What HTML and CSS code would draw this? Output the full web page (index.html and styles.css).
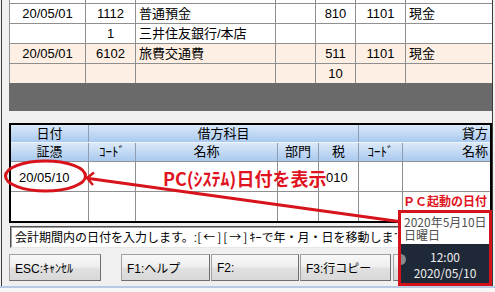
FILE: index.html
```html
<!DOCTYPE html>
<html lang="ja">
<head>
<meta charset="utf-8">
<title>仕訳入力</title>
<link rel="stylesheet" href="styles.css">
</head>
<body>
<div class="window">
  <div class="journal">
    <div class="jrow strip white"><span></span><span></span><span></span><span></span><span></span><span></span><span></span></div>
    <div class="jrow white">
      <span class="c">20/05/01</span><span class="c">1112</span><span class="l">普通預金</span><span></span><span class="c">810</span><span class="c">1101</span><span class="l">現金</span>
    </div>
    <div class="jrow white">
      <span></span><span class="c">1</span><span class="l">三井住友銀行/本店</span><span></span><span></span><span></span><span></span>
    </div>
    <div class="jrow peach">
      <span class="c">20/05/01</span><span class="c">6102</span><span class="l">旅費交通費</span><span></span><span class="c">511</span><span class="c">1101</span><span class="l">現金</span>
    </div>
    <div class="jrow peach">
      <span></span><span></span><span></span><span></span><span class="c">10</span><span></span><span></span>
    </div>
  </div>
  <div class="band"></div>

  <div class="entry">
    <div class="hrow h1">
      <span>日付</span><span>借方科目</span><span class="r">貸方</span>
    </div>
    <div class="hrow h2">
      <span>証憑</span><span>ｺｰﾄﾞ</span><span>名称</span><span>部門</span><span>税</span><span>ｺｰﾄﾞ</span><span class="r">名称</span>
    </div>
    <div class="drow">
      <span class="date">20/05/10</span><span></span><span></span><span></span><span class="tax">010</span><span></span><span></span>
    </div>
    <div class="drow last">
      <span></span><span></span><span></span><span></span><span></span><span></span><span></span>
    </div>
  </div>

  <div class="message"><span class="msg-text">会計期間内の日付を入力します。:<span class="keys">[←][→]</span>ｷｰで年・月・日を移動します。</span></div>

  <div class="buttons">
    <button class="btn esc">ESC:ｷｬﾝｾﾙ</button>
    <button class="btn f1">F1:ヘルプ</button>
    <button class="btn f2">F2:</button>
    <button class="btn f3">F3:行コピー</button>
    <button class="btn f4"></button>
  </div>
</div>
<div class="footer"></div>

<svg class="annot" width="495" height="292" viewBox="0 0 495 292">
  <ellipse cx="45.5" cy="176" rx="40" ry="15" fill="none" stroke="#d7141c" stroke-width="3"/>
  <line x1="89" y1="178.5" x2="399" y2="221.5" stroke="#d7141c" stroke-width="3"/>
  <polyline points="94,172.5 87,178 93,185" fill="none" stroke="#d7141c" stroke-width="2.5"/>
</svg>
<div class="callout">PC(ｼｽﾃﾑ)日付を表示</div>
<div class="pc-label">ＰＣ起動の日付</div>
<div class="clock">
  <div class="clock-date">2020年5月10日<br>日曜日</div>
  <div class="clock-bar">12:00<br>2020/05/10</div>
</div>
</body>
</html>
```

FILE: styles.css
```css
* { box-sizing: border-box; }
html, body { margin: 0; padding: 0; }
body {
  width: 495px;
  height: 292px;
  overflow: hidden;
  position: relative;
  background: #f0f0f0;
  font-family: "Liberation Sans", "Noto Sans CJK JP", sans-serif;
  font-size: 13px;
  color: #000;
}

.window {
  margin-left: 1px;
  width: 492px;
  height: 286px;
  border-left: 1px solid #3c3c3c;
  border-right: 1px solid #3c3c3c;
  padding-left: 7px;
}
.footer {
  height: 6px;
  border-top: 2px solid #b6cbe2;
  background: #f7f7f7;
}

/* upper journal list */
.jrow {
  display: grid;
  grid-template-columns: 76px 50px 140px 40px 40px 50px 1fr;
  height: 20px;
  border-top: 1px solid #8f8f8f;
}
.jrow > span {
  border-left: 1px solid #8f8f8f;
  line-height: 19px;
  white-space: nowrap;
  overflow: hidden;
}
.jrow.strip { height: 3px; border-top: 0; }
.white { background: #fff; }
.peach { background: #fdefe3; }
.c { text-align: center; }
.l { padding-left: 3px; }
.r { text-align: right; padding-right: 2px; }

.band {
  height: 28px;
  background: #6a6a6a;
}

/* entry grid */
.entry {
  margin-top: 12px;
  border: 2px solid #000;
  background: #fff;
}
.hrow, .drow {
  display: grid;
  grid-template-columns: 77px 47px 142px 41px 40px 44px 1fr;
}
.hrow {
  background: linear-gradient(#dbe9f9, #a9c9ef);
  text-align: center;
}
.hrow > span + span { border-left: 1px solid #8c9db3; }
.hrow > span { white-space: nowrap; overflow: hidden; }
.h1 {
  grid-template-columns: 77px 270px 1fr;
  height: 18px;
  line-height: 17px;
  border-bottom: 1px solid #eef4fb;
}
.h2 {
  height: 19px;
  line-height: 18px;
  border-bottom: 1px solid #8f8f8f;
}
.drow {
  height: 30px;
  border-bottom: 1px solid #8f8f8f;
}
.drow.last { height: 29px; border-bottom: 0; }
.drow > span + span { border-left: 1px solid #8f8f8f; }
.drow > span { line-height: 31px; white-space: nowrap; }
.date { padding-left: 8px; }
.tax { padding-left: 7px; }

/* message line */
.message {
  margin: 3px 0 0 1px;
  width: 482px;
  height: 22px;
  background: #fff;
  border: 1px solid;
  border-color: #505050 #e6e6e6 #e6e6e6 #505050;
  box-shadow: inset 1px 1px 0 #a0a0a0;
  padding-left: 4px;
  font-size: 12px;
  line-height: 19px;
  white-space: nowrap;
}
.msg-text {
  display: block;
  width: 382px;
  overflow: hidden;
}
.keys {
  font-family: "Noto Sans CJK JP", sans-serif;
  letter-spacing: 2px;
}

/* function buttons */
.buttons {
  display: flex;
  margin-top: 6px;
  height: 27px;
}
.btn {
  height: 27px;
  margin: 0;
  padding: 0 5px;
  text-align: left;
  font-family: "Liberation Sans", "Noto Sans CJK JP", sans-serif;
  font-size: 12px;
  color: #000;
  border: 1px solid #a2a2a2;
  border-right-color: #6e6e6e;
  border-bottom-color: #6e6e6e;
  background: linear-gradient(#f8f8f8 0%, #efefef 45%, #e0e0e0 55%, #d8d8d8 100%);
  white-space: nowrap;
}
.esc { width: 92px; }
.f1 { width: 89px; margin-left: 20px; }
.f2 { width: 88px; margin-left: 1px; }
.f3 { width: 91px; margin-left: 1px; }
.f4 { width: 90px; margin-left: 2px; }

/* annotations */
.annot {
  position: absolute;
  left: 0;
  top: 0;
  pointer-events: none;
}
.callout {
  position: absolute;
  left: 163px;
  top: 167px;
  font-family: "Noto Sans CJK JP", sans-serif;
  font-size: 18px;
  font-weight: bold;
  line-height: 22px;
  color: #e0141e;
  white-space: nowrap;
}
.pc-label {
  position: absolute;
  left: 403px;
  top: 194px;
  font-family: "Noto Sans CJK JP", sans-serif;
  font-size: 12px;
  font-weight: bold;
  line-height: 14px;
  color: #e0141e;
  white-space: nowrap;
}
.clock {
  position: absolute;
  left: 398px;
  top: 210px;
  width: 94px;
  height: 76px;
  border: 3px solid #d3121b;
  display: flex;
  flex-direction: column;
  font-family: "Noto Sans CJK JP", sans-serif;
  font-size: 12px;
}
.clock-date {
  height: 31px;
  background: #fff;
  padding: 2px 0 0 3px;
  line-height: 13px;
  color: #505050;
  white-space: nowrap;
}
.clock-bar {
  flex: 1;
  position: relative;
  overflow: hidden;
  background: #1f2836;
  color: #ececec;
  text-align: center;
  line-height: 16px;
  padding-top: 5px;
}
.clock-bar::before {
  content: "";
  position: absolute;
  left: -6px;
  top: 10px;
  width: 11px;
  height: 11px;
  border-radius: 50%;
  background: #8a8a8a;
}
```
